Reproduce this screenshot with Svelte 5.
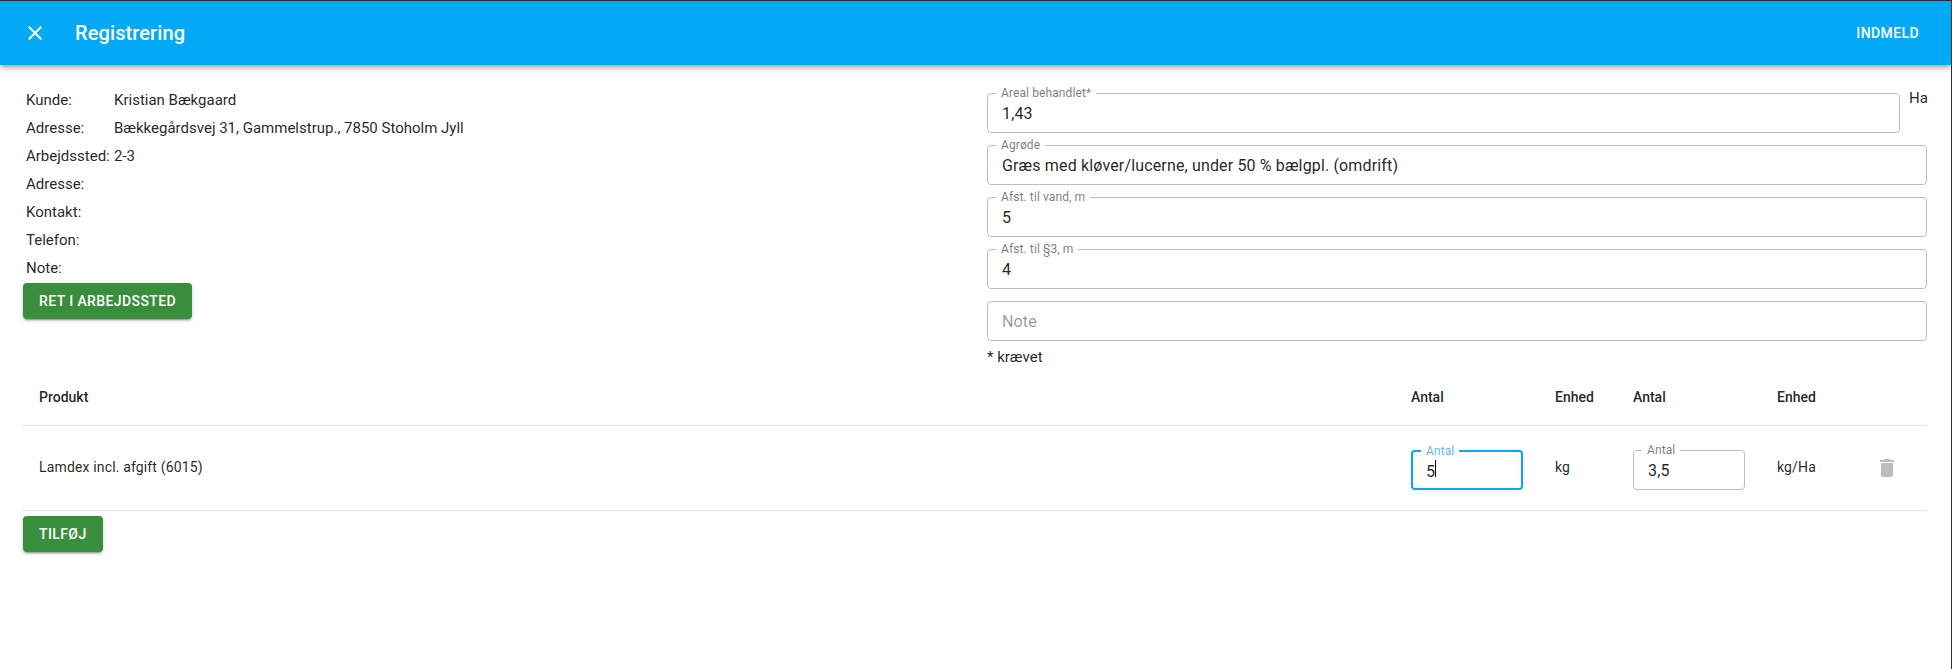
<script>
	const customer = [
		["Kunde:", "Kristian Bækgaard"],
		["Adresse:", "Bækkegårdsvej 31, Gammelstrup., 7850 Stoholm Jyll"],
		["Arbejdssted:", "2-3"],
		["Adresse:", ""],
		["Kontakt:", ""],
		["Telefon:", ""],
		["Note:", ""]
	];
	const fields = [
		{ label: "Agrøde", value: "Græs med kløver/lucerne, under 50 % bælgpl. (omdrift)" },
		{ label: "Afst. til vand, m", value: "5" },
		{ label: "Afst. til §3, m", value: "4" },
		{ label: "", value: "", placeholder: "Note" }
	];
</script>

{#snippet field(label, value, placeholder = "")}
	<fieldset class="field">
		<legend class:empty={!label}>{label}</legend>
		<input type="text" {value} {placeholder} readonly />
	</fieldset>
{/snippet}

<div class="page">
	<header class="appbar">
		<button class="icon-btn" aria-label="Luk">
			<svg viewBox="0 0 24 24" width="24" height="24"><path fill="#fff" d="M19 6.41 17.59 5 12 10.59 6.41 5 5 6.41 10.59 12 5 17.59 6.41 19 12 13.41 17.59 19 19 17.59 13.41 12z" /></svg>
		</button>
		<h1>Registrering</h1>
		<button class="text-btn">Indmeld</button>
	</header>

	<main>
		<section class="top">
			<div class="customer">
				<table class="info">
					<tbody>
						{#each customer as [k, v]}
							<tr><td class="key">{k}</td><td>{v}</td></tr>
						{/each}
					</tbody>
				</table>
				<button class="green wide">Ret i arbejdssted</button>
			</div>
			<div class="form">
				<div class="with-unit">
					{@render field("Areal behandlet*", "1,43")}
					<span class="unit">Ha</span>
				</div>
				{#each fields as f}
					{@render field(f.label, f.value, f.placeholder)}
				{/each}
				<p class="required">* krævet</p>
			</div>
		</section>

		<table class="products">
			<colgroup>
				<col class="c-name" /><col class="c-qty" /><col class="c-unit" /><col class="c-qty" /><col class="c-unit2" /><col />
			</colgroup>
			<thead>
				<tr><th>Produkt</th><th>Antal</th><th>Enhed</th><th>Antal</th><th>Enhed</th><th></th></tr>
			</thead>
			<tbody>
				<tr>
					<td>Lamdex incl. afgift (6015)</td>
					<td class="qty">
						<fieldset class="field focused">
							<legend>Antal</legend>
							<input type="text" value="5" readonly />
							<span class="caret"></span>
						</fieldset>
					</td>
					<td>kg</td>
					<td class="qty">{@render field("Antal", "3,5")}</td>
					<td>kg/Ha</td>
					<td class="trash">
						<svg viewBox="0 0 24 24" width="24" height="24"><path fill="#bdbdbd" d="M6 19c0 1.1.9 2 2 2h8c1.1 0 2-.9 2-2V7H6v12zM19 4h-3.5l-1-1h-5l-1 1H5v2h14V4z" /></svg>
					</td>
				</tr>
			</tbody>
		</table>

		<button class="green add">Tilføj</button>
	</main>
</div>

<style>
	:global(body) {
		margin: 0;
		background: #fff;
	}
	.page {
		font-family: Roboto, "Liberation Sans", sans-serif;
		color: rgba(0, 0, 0, 0.87);
		font-size: 15px;
		min-height: 669px;
		box-sizing: border-box;
		border-top: 1px solid #263238;
		border-right: 1px solid #263238;
	}
	button {
		font-family: inherit;
		border: 0;
		cursor: pointer;
	}

	.appbar {
		display: flex;
		align-items: center;
		height: 64px;
		padding: 0 24px 0 23px;
		background: #03a9f4;
		color: #fff;
		box-shadow: 0 2px 4px -1px rgba(0, 0, 0, 0.2), 0 4px 5px 0 rgba(0, 0, 0, 0.14), 0 1px 10px 0 rgba(0, 0, 0, 0.12);
	}
	.icon-btn {
		display: flex;
		padding: 0;
		background: none;
	}
	h1 {
		flex: 1;
		margin: 0 0 0 28px;
		font-size: 20px;
		font-weight: 500;
		line-height: 1.6;
		letter-spacing: 0.1px;
	}
	.text-btn {
		background: none;
		color: #fff;
		font-size: 14px;
		font-weight: 500;
		letter-spacing: 0.4px;
		text-transform: uppercase;
		padding: 0 8px;
	}

	main {
		padding: 21px 24px 0 23px;
	}
	.top {
		display: grid;
		grid-template-columns: 1fr 940px;
		column-gap: 24px;
	}
	.info {
		border-collapse: collapse;
	}
	.info td {
		height: 28px;
		padding: 0 0 0 3px;
		line-height: 20px;
	}
	.info td.key {
		width: 85px;
		padding-right: 0;
	}

	.green {
		display: block;
		height: 36px;
		padding: 0 16px;
		border-radius: 4px;
		background: #388e3c;
		color: #fff;
		font-size: 14px;
		font-weight: 500;
		letter-spacing: 0.4px;
		text-transform: uppercase;
		box-shadow: 0 3px 1px -2px rgba(0, 0, 0, 0.2), 0 2px 2px 0 rgba(0, 0, 0, 0.14), 0 1px 5px 0 rgba(0, 0, 0, 0.12);
	}
	.wide {
		margin-top: 1px;
	}

	.form {
		display: flex;
		flex-direction: column;
		gap: 5px;
	}
	.with-unit {
		display: flex;
		align-items: flex-start;
	}
	.with-unit .field {
		flex: 1;
	}
	.unit {
		width: 27px;
		box-sizing: border-box;
		padding: 4px 0 0 9px;
		line-height: 16px;
	}
	.field {
		position: relative;
		min-width: 0;
		margin: 0;
		padding: 0 14px;
		border: 1px solid #bdbdbd;
		border-radius: 4px;
		height: 47px;
		box-sizing: border-box;
	}
	legend {
		font-size: 12px;
		line-height: 14px;
		padding: 0 5px;
		margin-left: -6px;
		letter-spacing: 0.1px;
		color: rgba(0, 0, 0, 0.54);
	}
	legend.empty {
		display: block;
		height: 14px;
		padding: 0;
	}
	input {
		display: block;
		width: 100%;
		height: 27px;
		padding: 0;
		border: 0;
		outline: 0;
		background: none;
		font: 16px/19px Roboto, "Liberation Sans", sans-serif;
		letter-spacing: 0.15px;
		color: rgba(0, 0, 0, 0.87);
	}
	input::placeholder {
		color: rgba(0, 0, 0, 0.42);
		opacity: 1;
	}
	.required {
		margin: 1px 0 0;
		line-height: 20px;
	}

	.products {
		width: 100%;
		border-collapse: collapse;
		table-layout: fixed;
		margin-top: 1px;
		font-size: 14px;
	}
	.c-name {
		width: 1372px;
	}
	.c-qty {
		width: 144px;
	}
	.c-unit {
		width: 78px;
	}
	.c-unit2 {
		width: 99px;
	}
	.products th {
		height: 57px;
		padding: 0 0 0 16px;
		text-align: left;
		font-weight: 500;
		border-bottom: 1px solid #e0e0e0;
	}
	.products td {
		box-sizing: border-box;
		height: 85px;
		padding: 0 16px 2px 16px;
		border-bottom: 1px solid #e0e0e0;
		letter-spacing: 0.15px;
	}
	.products td.qty {
		vertical-align: top;
		padding: 17px 16px 0;
	}
	.products td .field {
		width: 112px;
	}
	.products td.trash {
		padding: 0 0 0 15px;
	}
	.trash svg {
		display: block;
	}

	.focused {
		border: 2px solid #03a9f4;
		padding: 0 13px;
	}
	.products td .focused {
		margin-top: 1px;
		height: 46px;
	}
	.focused legend {
		color: #64b5f6;
		margin-left: -5px;
	}
	.caret {
		position: absolute;
		left: 13px;
		top: 2px;
		width: 1px;
		height: 17px;
		margin-left: 9px;
		background: #000;
	}

	.add {
		margin-top: 5px;
	}
</style>
